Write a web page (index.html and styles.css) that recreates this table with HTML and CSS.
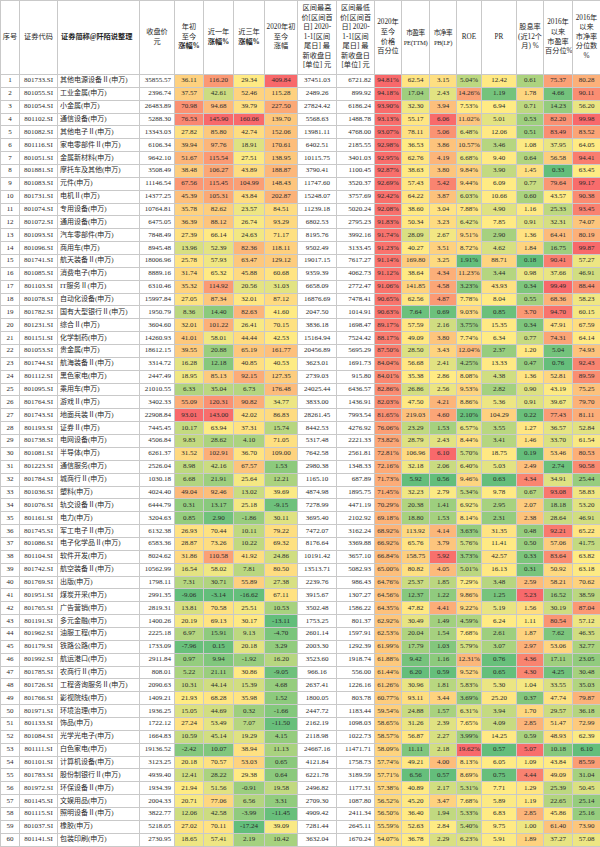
FILE: index.html
```html
<!DOCTYPE html>
<html lang="zh-CN">
<head>
<meta charset="utf-8">
<title>申万行业估值表</title>
<link rel="stylesheet" href="styles.css">
</head>
<body>
<table class="sheet">
<colgroup>
<col style="width:19px"><col style="width:38px"><col style="width:82px"><col style="width:35px"><col style="width:29px"><col style="width:30px"><col style="width:31px"><col style="width:33px"><col style="width:39px"><col style="width:38px"><col style="width:27px"><col style="width:28px"><col style="width:27px"><col style="width:25px"><col style="width:35px"><col style="width:27px"><col style="width:29px"><col style="width:28px">
</colgroup>
<thead>
<tr class="head">
<th>序号</th><th>证券代码</th><th class="hl">证券简称@阡陌说整理</th><th>收盘价<br>元</th><th>年初<br>至今<br><b>涨幅%</b></th><th>近一年<br><b>涨幅%</b></th><th>近三年<br><b>涨幅%</b></th><th>2020年初<br>至今<br>涨幅</th><th>区间最高<br>价[区间首<br>日] 2020-<br>1-1[区间<br>尾日] 最<br>新收盘日<br>[单位] 元</th><th>区间最低<br>价[区间首<br>日] 2020-<br>1-1[区间<br>尾日] 最<br>新收盘日<br>[单位] 元</th><th>2020年<br>至今<br>价格<br>百分位</th><th class="tight">市盈率<br>PE(TTM)</th><th class="tight">市净率<br>PB(LF)</th><th>ROE</th><th>PR</th><th>股息率<br>(近12个<br>月) %</th><th>2016年<br>以来<br>市盈率<br>百分位%</th><th>2016年<br>以来<br>市净率<br>分位数<br>%</th>
</tr>
</thead>
<tbody>
<tr><td>1</td><td>801733.SI</td><td>其他电源设备Ⅱ(申万)</td><td>35855.57</td><td>36.11</td><td>116.20</td><td>29.34</td><td>409.84</td><td>37451.03</td><td>6721.82</td><td>94.81%</td><td>62.54</td><td>3.15</td><td>5.04%</td><td>12.42</td><td>0.61</td><td>75.37</td><td>80.28</td></tr>
<tr><td>2</td><td>801055.SI</td><td>工业金属(申万)</td><td>2396.74</td><td>37.57</td><td>42.61</td><td>52.46</td><td>115.28</td><td>2489.26</td><td>899.92</td><td>94.18%</td><td>17.04</td><td>2.43</td><td>14.26%</td><td>1.19</td><td>1.78</td><td>4.66</td><td>90.11</td></tr>
<tr><td>3</td><td>801054.SI</td><td>小金属(申万)</td><td>26483.89</td><td>70.98</td><td>94.68</td><td>39.79</td><td>227.50</td><td>27824.42</td><td>6186.24</td><td>93.90%</td><td>32.30</td><td>3.94</td><td>7.53%</td><td>6.94</td><td>0.71</td><td>14.23</td><td>56.20</td></tr>
<tr><td>4</td><td>801102.SI</td><td>通信设备(申万)</td><td>5288.30</td><td>76.53</td><td>145.90</td><td>160.06</td><td>139.70</td><td>5568.63</td><td>1488.78</td><td>93.13%</td><td>55.17</td><td>6.06</td><td>11.02%</td><td>5.01</td><td>0.53</td><td>82.20</td><td>99.98</td></tr>
<tr><td>5</td><td>801082.SI</td><td>其他电子Ⅱ(申万)</td><td>13343.03</td><td>27.82</td><td>85.80</td><td>42.74</td><td>152.06</td><td>13981.11</td><td>4768.00</td><td>93.07%</td><td>78.11</td><td>5.06</td><td>6.48%</td><td>12.06</td><td>0.51</td><td>83.49</td><td>83.52</td></tr>
<tr><td>6</td><td>801116.SI</td><td>家电零部件Ⅱ(申万)</td><td>6106.34</td><td>39.94</td><td>97.76</td><td>18.91</td><td>170.61</td><td>6402.51</td><td>2185.55</td><td>92.98%</td><td>36.53</td><td>3.86</td><td>10.57%</td><td>3.46</td><td>1.08</td><td>37.95</td><td>64.05</td></tr>
<tr><td>7</td><td>801051.SI</td><td>金属新材料(申万)</td><td>9642.10</td><td>51.67</td><td>115.54</td><td>27.51</td><td>138.95</td><td>10115.75</td><td>3401.03</td><td>92.95%</td><td>62.76</td><td>4.19</td><td>6.68%</td><td>9.40</td><td>0.64</td><td>56.58</td><td>94.41</td></tr>
<tr><td>8</td><td>801881.SI</td><td>摩托车及其他(申万)</td><td>3508.49</td><td>38.48</td><td>106.27</td><td>43.89</td><td>188.87</td><td>3790.41</td><td>1100.45</td><td>92.87%</td><td>38.63</td><td>3.80</td><td>9.84%</td><td>3.90</td><td>1.45</td><td>0.33</td><td>63.45</td></tr>
<tr><td>9</td><td>801083.SI</td><td>元件(申万)</td><td>11146.54</td><td>67.56</td><td>115.45</td><td>104.99</td><td>148.43</td><td>11747.60</td><td>3520.37</td><td>92.69%</td><td>57.43</td><td>5.42</td><td>9.44%</td><td>6.09</td><td>0.77</td><td>79.64</td><td>99.17</td></tr>
<tr><td>10</td><td>801731.SI</td><td>电机Ⅱ(申万)</td><td>14377.25</td><td>45.39</td><td>105.31</td><td>43.84</td><td>202.87</td><td>15248.07</td><td>3757.69</td><td>92.42%</td><td>64.22</td><td>3.87</td><td>6.03%</td><td>10.66</td><td>0.60</td><td>43.57</td><td>90.38</td></tr>
<tr><td>11</td><td>801074.SI</td><td>专用设备(申万)</td><td>10764.81</td><td>35.78</td><td>82.62</td><td>23.57</td><td>84.51</td><td>11239.18</td><td>5020.24</td><td>92.08%</td><td>38.60</td><td>3.04</td><td>7.88%</td><td>4.90</td><td>1.16</td><td>25.33</td><td>93.45</td></tr>
<tr><td>12</td><td>801072.SI</td><td>通用设备(申万)</td><td>6475.05</td><td>36.39</td><td>88.12</td><td>26.74</td><td>93.29</td><td>6802.53</td><td>2795.23</td><td>91.83%</td><td>50.34</td><td>3.23</td><td>6.42%</td><td>7.85</td><td>0.91</td><td>32.31</td><td>74.07</td></tr>
<tr><td>13</td><td>801093.SI</td><td>汽车零部件(申万)</td><td>7848.49</td><td>27.39</td><td>66.14</td><td>24.63</td><td>71.17</td><td>8195.76</td><td>3992.16</td><td>91.74%</td><td>28.09</td><td>2.67</td><td>9.51%</td><td>2.90</td><td>1.36</td><td>64.41</td><td>80.19</td></tr>
<tr><td>14</td><td>801096.SI</td><td>商用车(申万)</td><td>8945.48</td><td>13.96</td><td>52.39</td><td>82.36</td><td>118.11</td><td>9502.49</td><td>3133.45</td><td>91.23%</td><td>40.27</td><td>3.51</td><td>8.72%</td><td>4.62</td><td>1.84</td><td>16.75</td><td>99.87</td></tr>
<tr><td>15</td><td>801741.SI</td><td>航天装备Ⅱ(申万)</td><td>18006.96</td><td>25.78</td><td>57.93</td><td>63.47</td><td>129.12</td><td>19017.15</td><td>7617.27</td><td>91.14%</td><td>169.80</td><td>3.25</td><td>1.91%</td><td>88.71</td><td>0.18</td><td>90.41</td><td>57.27</td></tr>
<tr><td>16</td><td>801085.SI</td><td>消费电子(申万)</td><td>8889.16</td><td>31.74</td><td>65.32</td><td>45.88</td><td>60.68</td><td>9359.39</td><td>4062.73</td><td>91.12%</td><td>38.64</td><td>4.34</td><td>11.23%</td><td>3.44</td><td>0.98</td><td>37.66</td><td>46.91</td></tr>
<tr><td>17</td><td>801103.SI</td><td>IT服务Ⅱ(申万)</td><td>6310.46</td><td>35.32</td><td>114.92</td><td>20.56</td><td>31.03</td><td>6658.09</td><td>2772.47</td><td>91.06%</td><td>141.85</td><td>4.58</td><td>3.23%</td><td>43.93</td><td>0.34</td><td>99.49</td><td>88.44</td></tr>
<tr><td>18</td><td>801078.SI</td><td>自动化设备(申万)</td><td>15997.84</td><td>27.05</td><td>87.34</td><td>32.01</td><td>87.12</td><td>16876.69</td><td>7478.41</td><td>90.65%</td><td>62.56</td><td>4.87</td><td>7.78%</td><td>8.04</td><td>0.55</td><td>68.36</td><td>58.23</td></tr>
<tr><td>19</td><td>801782.SI</td><td>国有大型银行Ⅱ(申万)</td><td>1950.79</td><td>8.36</td><td>14.40</td><td>82.63</td><td>41.60</td><td>2047.50</td><td>1014.91</td><td>90.63%</td><td>7.64</td><td>0.69</td><td>9.03%</td><td>0.85</td><td>3.70</td><td>94.70</td><td>60.15</td></tr>
<tr><td>20</td><td>801231.SI</td><td>综合Ⅱ(申万)</td><td>3604.60</td><td>32.01</td><td>101.22</td><td>26.41</td><td>70.15</td><td>3836.18</td><td>1698.47</td><td>89.17%</td><td>57.59</td><td>2.16</td><td>3.75%</td><td>15.35</td><td>0.34</td><td>47.91</td><td>67.59</td></tr>
<tr><td>21</td><td>801151.SI</td><td>化学制药(申万)</td><td>14260.93</td><td>41.01</td><td>58.01</td><td>44.44</td><td>42.53</td><td>15164.94</td><td>7524.42</td><td>88.17%</td><td>49.09</td><td>3.80</td><td>7.74%</td><td>6.34</td><td>0.77</td><td>74.31</td><td>64.14</td></tr>
<tr><td>22</td><td>801053.SI</td><td>贵金属(申万)</td><td>18612.15</td><td>39.55</td><td>20.88</td><td>65.19</td><td>161.77</td><td>20456.89</td><td>5695.29</td><td>87.50%</td><td>28.50</td><td>3.43</td><td>12.04%</td><td>2.37</td><td>1.20</td><td>5.04</td><td>74.93</td></tr>
<tr><td>23</td><td>801744.SI</td><td>航海装备Ⅱ(申万)</td><td>3314.72</td><td>16.28</td><td>12.18</td><td>40.85</td><td>40.53</td><td>3623.01</td><td>1691.73</td><td>84.04%</td><td>56.68</td><td>2.41</td><td>4.25%</td><td>13.33</td><td>0.47</td><td>0.76</td><td>92.43</td></tr>
<tr><td>24</td><td>801112.SI</td><td>黑色家电(申万)</td><td>2447.49</td><td>18.95</td><td>85.13</td><td>92.15</td><td>127.35</td><td>2739.03</td><td>915.80</td><td>84.01%</td><td>35.38</td><td>2.86</td><td>8.08%</td><td>4.38</td><td>1.36</td><td>52.81</td><td>89.59</td></tr>
<tr><td>25</td><td>801095.SI</td><td>乘用车(申万)</td><td>21010.55</td><td>6.33</td><td>35.04</td><td>6.73</td><td>176.48</td><td>24025.44</td><td>6436.57</td><td>82.86%</td><td>26.86</td><td>2.56</td><td>9.53%</td><td>2.82</td><td>0.90</td><td>43.19</td><td>75.25</td></tr>
<tr><td>26</td><td>801764.SI</td><td>游戏Ⅱ(申万)</td><td>3402.33</td><td>55.09</td><td>120.31</td><td>90.82</td><td>34.77</td><td>3833.00</td><td>1436.91</td><td>82.03%</td><td>47.50</td><td>4.21</td><td>8.86%</td><td>5.36</td><td>0.91</td><td>39.67</td><td>79.70</td></tr>
<tr><td>27</td><td>801743.SI</td><td>地面兵装Ⅱ(申万)</td><td>22908.84</td><td>93.01</td><td>143.00</td><td>42.02</td><td>86.83</td><td>28261.45</td><td>7993.54</td><td>81.65%</td><td>219.03</td><td>4.60</td><td>2.10%</td><td>104.29</td><td>0.22</td><td>77.43</td><td>81.11</td></tr>
<tr><td>28</td><td>801193.SI</td><td>证券Ⅱ(申万)</td><td>7445.45</td><td>10.17</td><td>63.94</td><td>37.31</td><td>15.74</td><td>8442.53</td><td>4276.92</td><td>76.06%</td><td>23.29</td><td>1.53</td><td>6.57%</td><td>3.55</td><td>1.27</td><td>36.57</td><td>52.84</td></tr>
<tr><td>29</td><td>801738.SI</td><td>电网设备(申万)</td><td>4506.84</td><td>9.83</td><td>28.62</td><td>4.10</td><td>71.05</td><td>5317.48</td><td>2221.33</td><td>73.82%</td><td>28.79</td><td>2.43</td><td>8.44%</td><td>3.41</td><td>1.46</td><td>33.70</td><td>61.54</td></tr>
<tr><td>30</td><td>801081.SI</td><td>半导体(申万)</td><td>6261.37</td><td>31.52</td><td>102.91</td><td>36.70</td><td>109.00</td><td>7642.58</td><td>2561.81</td><td>72.81%</td><td>106.96</td><td>6.10</td><td>5.70%</td><td>18.75</td><td>0.19</td><td>53.46</td><td>80.53</td></tr>
<tr><td>31</td><td>801223.SI</td><td>通信服务(申万)</td><td>2526.04</td><td>8.98</td><td>42.16</td><td>67.57</td><td>1.53</td><td>2980.38</td><td>1348.33</td><td>72.16%</td><td>32.18</td><td>2.06</td><td>6.40%</td><td>5.03</td><td>2.49</td><td>2.74</td><td>90.58</td></tr>
<tr><td>32</td><td>801784.SI</td><td>城商行Ⅱ(申万)</td><td>1030.18</td><td>6.68</td><td>21.91</td><td>25.64</td><td>12.21</td><td>1165.10</td><td>687.89</td><td>71.73%</td><td>5.92</td><td>0.56</td><td>9.46%</td><td>0.63</td><td>4.34</td><td>34.91</td><td>25.44</td></tr>
<tr><td>33</td><td>801036.SI</td><td>塑料(申万)</td><td>4024.40</td><td>49.04</td><td>92.46</td><td>13.02</td><td>39.69</td><td>4874.98</td><td>1895.75</td><td>71.45%</td><td>32.23</td><td>2.79</td><td>5.34%</td><td>9.78</td><td>0.67</td><td>93.08</td><td>58.83</td></tr>
<tr><td>34</td><td>801076.SI</td><td>轨交设备Ⅱ(申万)</td><td>6444.79</td><td>0.31</td><td>13.17</td><td>25.18</td><td>-9.15</td><td>7278.99</td><td>4471.19</td><td>70.29%</td><td>20.38</td><td>1.41</td><td>6.92%</td><td>2.95</td><td>2.07</td><td>18.18</td><td>53.20</td></tr>
<tr><td>35</td><td>801161.SI</td><td>电力(申万)</td><td>3204.63</td><td>0.85</td><td>2.90</td><td>-1.86</td><td>30.11</td><td>3695.40</td><td>2102.92</td><td>69.18%</td><td>18.80</td><td>1.53</td><td>8.14%</td><td>2.31</td><td>2.38</td><td>28.64</td><td>46.91</td></tr>
<tr><td>36</td><td>801745.SI</td><td>军工电子Ⅱ(申万)</td><td>6132.38</td><td>26.93</td><td>70.44</td><td>10.11</td><td>79.22</td><td>7472.07</td><td>3162.24</td><td>68.92%</td><td>113.92</td><td>4.14</td><td>3.63%</td><td>31.35</td><td>0.48</td><td>92.21</td><td>65.22</td></tr>
<tr><td>37</td><td>801086.SI</td><td>电子化学品Ⅱ(申万)</td><td>6583.36</td><td>28.87</td><td>73.26</td><td>10.22</td><td>69.32</td><td>8176.64</td><td>3369.88</td><td>66.92%</td><td>65.76</td><td>3.79</td><td>5.76%</td><td>11.41</td><td>0.50</td><td>57.06</td><td>41.75</td></tr>
<tr><td>38</td><td>801104.SI</td><td>软件开发(申万)</td><td>8024.62</td><td>31.86</td><td>110.58</td><td>41.92</td><td>24.86</td><td>10191.42</td><td>3657.10</td><td>66.84%</td><td>158.75</td><td>5.92</td><td>3.73%</td><td>42.57</td><td>0.33</td><td>83.64</td><td>63.82</td></tr>
<tr><td>39</td><td>801742.SI</td><td>航空装备Ⅱ(申万)</td><td>10562.99</td><td>16.54</td><td>58.02</td><td>7.81</td><td>80.50</td><td>13513.71</td><td>5082.93</td><td>65.00%</td><td>80.82</td><td>4.05</td><td>5.01%</td><td>16.13</td><td>0.31</td><td>50.92</td><td>63.18</td></tr>
<tr><td>40</td><td>801769.SI</td><td>出版(申万)</td><td>1798.11</td><td>7.31</td><td>30.71</td><td>55.89</td><td>27.38</td><td>2239.76</td><td>986.43</td><td>64.76%</td><td>25.37</td><td>1.85</td><td>7.29%</td><td>3.48</td><td>2.59</td><td>58.21</td><td>70.62</td></tr>
<tr><td>41</td><td>801951.SI</td><td>煤炭开采(申万)</td><td>2991.35</td><td>-9.06</td><td>-3.14</td><td>-16.62</td><td>67.11</td><td>3915.67</td><td>1307.27</td><td>64.56%</td><td>12.37</td><td>1.22</td><td>9.86%</td><td>1.25</td><td>5.23</td><td>16.52</td><td>38.59</td></tr>
<tr><td>42</td><td>801765.SI</td><td>广告营销(申万)</td><td>2819.31</td><td>13.81</td><td>70.58</td><td>25.51</td><td>10.53</td><td>3502.48</td><td>1586.22</td><td>64.35%</td><td>47.82</td><td>4.41</td><td>9.22%</td><td>5.19</td><td>1.56</td><td>30.19</td><td>87.04</td></tr>
<tr><td>43</td><td>801191.SI</td><td>多元金融(申万)</td><td>1400.26</td><td>20.19</td><td>69.13</td><td>30.17</td><td>-13.11</td><td>1753.25</td><td>801.37</td><td>62.92%</td><td>30.49</td><td>1.49</td><td>4.59%</td><td>6.24</td><td>1.11</td><td>80.54</td><td>57.12</td></tr>
<tr><td>44</td><td>801962.SI</td><td>油服工程(申万)</td><td>2225.18</td><td>6.97</td><td>15.91</td><td>9.13</td><td>-4.70</td><td>2601.14</td><td>1597.91</td><td>62.53%</td><td>20.04</td><td>1.54</td><td>7.68%</td><td>2.61</td><td>1.87</td><td>7.62</td><td>46.35</td></tr>
<tr><td>45</td><td>801179.SI</td><td>铁路公路(申万)</td><td>1733.09</td><td>-7.96</td><td>0.15</td><td>20.18</td><td>3.29</td><td>2003.30</td><td>1292.39</td><td>61.99%</td><td>17.79</td><td>1.03</td><td>5.79%</td><td>3.07</td><td>2.97</td><td>53.06</td><td>32.77</td></tr>
<tr><td>46</td><td>801992.SI</td><td>航运港口(申万)</td><td>2911.84</td><td>0.97</td><td>9.94</td><td>-1.92</td><td>16.20</td><td>3523.60</td><td>1918.74</td><td>61.88%</td><td>9.42</td><td>1.16</td><td>12.31%</td><td>0.76</td><td>4.36</td><td>17.11</td><td>23.05</td></tr>
<tr><td>47</td><td>801785.SI</td><td>农商行Ⅱ(申万)</td><td>808.01</td><td>5.22</td><td>21.11</td><td>30.86</td><td>-9.05</td><td>966.16</td><td>556.00</td><td>61.44%</td><td>6.20</td><td>0.59</td><td>9.52%</td><td>0.65</td><td>4.30</td><td>4.25</td><td>30.48</td></tr>
<tr><td>48</td><td>801726.SI</td><td>工程咨询服务Ⅱ(申万)</td><td>2090.63</td><td>10.31</td><td>44.14</td><td>15.39</td><td>4.68</td><td>2637.41</td><td>1226.16</td><td>61.26%</td><td>30.96</td><td>1.81</td><td>5.83%</td><td>5.30</td><td>1.04</td><td>33.55</td><td>35.03</td></tr>
<tr><td>49</td><td>801766.SI</td><td>影视院线(申万)</td><td>1409.21</td><td>21.93</td><td>68.28</td><td>35.98</td><td>1.52</td><td>1800.05</td><td>803.78</td><td>60.77%</td><td>93.11</td><td>3.44</td><td>3.69%</td><td>25.20</td><td>0.37</td><td>47.74</td><td>79.87</td></tr>
<tr><td>50</td><td>801971.SI</td><td>环境治理(申万)</td><td>1936.25</td><td>15.05</td><td>44.69</td><td>0.32</td><td>-1.66</td><td>2447.72</td><td>1183.44</td><td>59.54%</td><td>24.88</td><td>1.57</td><td>6.31%</td><td>3.94</td><td>1.70</td><td>29.57</td><td>36.18</td></tr>
<tr><td>51</td><td>801133.SI</td><td>饰品(申万)</td><td>1722.12</td><td>27.24</td><td>53.49</td><td>7.07</td><td>-11.50</td><td>2162.19</td><td>1098.03</td><td>58.65%</td><td>31.26</td><td>2.39</td><td>7.65%</td><td>4.09</td><td>2.85</td><td>51.47</td><td>72.99</td></tr>
<tr><td>52</td><td>801084.SI</td><td>光学光电子(申万)</td><td>1664.83</td><td>10.59</td><td>45.14</td><td>19.29</td><td>4.15</td><td>2118.98</td><td>1022.73</td><td>58.57%</td><td>56.87</td><td>2.27</td><td>3.99%</td><td>14.25</td><td>0.59</td><td>48.93</td><td>62.39</td></tr>
<tr><td>53</td><td>801111.SI</td><td>白色家电(申万)</td><td>19136.52</td><td>-2.42</td><td>10.07</td><td>38.94</td><td>11.13</td><td>24667.16</td><td>11471.71</td><td>58.09%</td><td>11.11</td><td>2.18</td><td>19.62%</td><td>0.57</td><td>5.07</td><td>10.18</td><td>6.10</td></tr>
<tr><td>54</td><td>801101.SI</td><td>计算机设备(申万)</td><td>3123.25</td><td>20.18</td><td>70.57</td><td>53.03</td><td>0.65</td><td>4121.84</td><td>1758.73</td><td>57.74%</td><td>49.21</td><td>4.00</td><td>8.13%</td><td>6.05</td><td>1.09</td><td>43.84</td><td>85.59</td></tr>
<tr><td>55</td><td>801783.SI</td><td>股份制银行Ⅱ(申万)</td><td>4939.40</td><td>12.41</td><td>28.22</td><td>29.38</td><td>0.64</td><td>6221.78</td><td>3189.59</td><td>57.71%</td><td>6.56</td><td>0.57</td><td>8.69%</td><td>0.75</td><td>4.44</td><td>49.09</td><td>31.04</td></tr>
<tr><td>56</td><td>801972.SI</td><td>环保设备Ⅱ(申万)</td><td>1934.39</td><td>21.94</td><td>51.56</td><td>-0.91</td><td>19.58</td><td>2496.82</td><td>1177.31</td><td>57.38%</td><td>40.89</td><td>2.17</td><td>5.31%</td><td>7.71</td><td>1.29</td><td>25.39</td><td>50.45</td></tr>
<tr><td>57</td><td>801145.SI</td><td>文娱用品(申万)</td><td>2004.33</td><td>20.71</td><td>77.06</td><td>6.56</td><td>3.31</td><td>2709.30</td><td>1087.80</td><td>56.52%</td><td>45.20</td><td>3.47</td><td>7.68%</td><td>5.89</td><td>1.19</td><td>22.65</td><td>25.14</td></tr>
<tr><td>58</td><td>801115.SI</td><td>照明设备Ⅱ(申万)</td><td>3822.77</td><td>12.06</td><td>42.58</td><td>-3.99</td><td>-11.45</td><td>4909.42</td><td>2411.34</td><td>56.50%</td><td>36.40</td><td>1.94</td><td>5.33%</td><td>6.83</td><td>2.85</td><td>45.86</td><td>25.16</td></tr>
<tr><td>59</td><td>801037.SI</td><td>橡胶(申万)</td><td>5218.05</td><td>27.02</td><td>70.11</td><td>-17.24</td><td>39.09</td><td>7281.44</td><td>2645.11</td><td>55.59%</td><td>52.63</td><td>2.84</td><td>5.40%</td><td>9.75</td><td>1.00</td><td>61.40</td><td>73.90</td></tr>
<tr><td>60</td><td>801141.SI</td><td>包装印刷(申万)</td><td>2730.95</td><td>18.65</td><td>57.41</td><td>2.19</td><td>10.42</td><td>3632.04</td><td>1670.24</td><td>54.07%</td><td>36.78</td><td>2.29</td><td>6.23%</td><td>5.91</td><td>1.89</td><td>37.27</td><td>57.08</td></tr>
</tbody>
</table>
<script src="script.js"></script>
</body>
</html>
```

FILE: styles.css
```css
html, body {
  margin: 0;
  padding: 0;
  background: #ffffff;
}

.sheet {
  width: 600px;
  table-layout: fixed;
  border-collapse: collapse;
  font-family: "Liberation Serif", "Noto Sans CJK SC", serif;
  font-size: 7px;
  color: #2a2a2a;
}

.sheet th,
.sheet td {
  border: 1px solid #c9c9c9;
  padding: 0 1px;
  overflow: hidden;
  white-space: nowrap;
  text-align: center;
}

.sheet .head th {
  height: 73px;
  font-weight: normal;
  font-size: 7.2px;
  line-height: 9.6px;
  vertical-align: middle;
  color: #1e1e1e;
}

.sheet .head th b {
  font-weight: bold;
}

.sheet .head th.hl {
  text-align: left;
  padding-left: 3px;
  font-weight: bold;
}

.sheet .head th.tight {
  padding: 0;
  font-size: 6.6px;
  letter-spacing: -0.35px;
}

.sheet tbody tr {
  height: 12.86px;
}

.sheet tbody td {
  line-height: 11px;
  vertical-align: middle;
}

.sheet tbody td:nth-child(3) {
  text-align: left;
  padding-left: 2px;
}

.sheet tbody td:nth-child(4),
.sheet tbody td:nth-child(10) {
  text-align: right;
  padding-right: 3px;
}
```

FILE: script.js
```js
(function () {
  var GREEN = [99, 190, 123];
  var YELLOW = [255, 235, 132];
  var RED = [248, 105, 107];

  // column index -> overrides for the 3-colour scale
  var scales = {
    4: {}, 5: {}, 6: {}, 7: {},
    10: { min: 0, mid: 50 },
    11: { mid: 35, max: 600 },
    12: {}, 13: {},
    14: { mid: 6, max: 500 },
    15: {}, 16: {}, 17: {}
  };

  var rows = document.querySelectorAll('.sheet tbody tr');

  function mix(a, b, t) {
    t = Math.max(0, Math.min(1, t));
    return 'rgb(' + [0, 1, 2].map(function (i) {
      return Math.round(a[i] + (b[i] - a[i]) * t);
    }).join(',') + ')';
  }

  Object.keys(scales).forEach(function (key) {
    var col = +key;
    var cells = [];
    rows.forEach(function (r) { cells.push(r.children[col]); });
    var vals = cells.map(function (c) { return parseFloat(c.textContent); });
    var sorted = vals.slice().sort(function (a, b) { return a - b; });
    var n = sorted.length;
    var median = (sorted[Math.floor((n - 1) / 2)] + sorted[Math.ceil((n - 1) / 2)]) / 2;
    var s = scales[key];
    var min = s.min !== undefined ? s.min : sorted[0];
    var max = s.max !== undefined ? s.max : sorted[n - 1];
    var mid = s.mid !== undefined ? s.mid : median;
    cells.forEach(function (c, i) {
      var v = vals[i];
      var color = v <= mid
        ? mix(GREEN, YELLOW, (v - min) / (mid - min))
        : mix(YELLOW, RED, (v - mid) / (max - mid));
      c.style.backgroundColor = color;
    });
  });
})();
```
